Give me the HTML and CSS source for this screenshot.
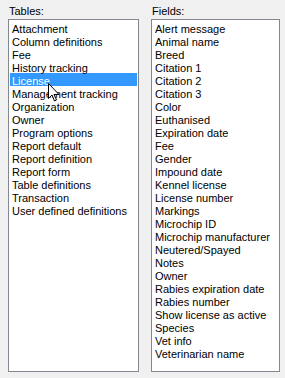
FILE: index.html
```html
<!DOCTYPE html>
<html>
<head>
<meta charset="utf-8">
<link rel="stylesheet" href="styles.css">
</head>
<body>
<div class="panel">
  <div class="group group-tables">
    <div class="label">Tables:</div>
    <ul class="list list-tables">
      <li>Attachment</li>
      <li>Column definitions</li>
      <li>Fee</li>
      <li>History tracking</li>
      <li class="selected">License</li>
      <li>Management tracking</li>
      <li>Organization</li>
      <li>Owner</li>
      <li>Program options</li>
      <li>Report default</li>
      <li>Report definition</li>
      <li>Report form</li>
      <li>Table definitions</li>
      <li>Transaction</li>
      <li>User defined definitions</li>
    </ul>
    <svg class="cursor" width="12" height="19" viewBox="0 0 12 19">
      <path d="M0.5 0.5 L0.5 15.5 L4 12 L6.5 18 L8.5 17 L6 11.5 L11 11.5 Z" fill="#fff" stroke="#000" stroke-width="1" stroke-linejoin="miter"/>
    </svg>
  </div>
  <div class="group group-fields">
    <div class="label">Fields:</div>
    <ul class="list list-fields">
      <li>Alert message</li>
      <li>Animal name</li>
      <li>Breed</li>
      <li>Citation 1</li>
      <li>Citation 2</li>
      <li>Citation 3</li>
      <li>Color</li>
      <li>Euthanised</li>
      <li>Expiration date</li>
      <li>Fee</li>
      <li>Gender</li>
      <li>Impound date</li>
      <li>Kennel license</li>
      <li>License number</li>
      <li>Markings</li>
      <li>Microchip ID</li>
      <li>Microchip manufacturer</li>
      <li>Neutered/Spayed</li>
      <li>Notes</li>
      <li>Owner</li>
      <li>Rabies expiration date</li>
      <li>Rabies number</li>
      <li>Show license as active</li>
      <li>Species</li>
      <li>Vet info</li>
      <li>Veterinarian name</li>
    </ul>
  </div>
</div>
</body>
</html>
```

FILE: styles.css
```css
html, body {
  margin: 0;
  padding: 0;
  background: #f0f0f0;
  width: 285px;
  height: 378px;
  overflow: hidden;
}
body {
  font-family: "Liberation Sans", Arial, sans-serif;
  font-size: 11px;
  color: #000;
}
.panel {
  display: flex;
  padding: 4px 0 0 8px;
  gap: 12px;
}
.group {
  position: relative;
  display: flex;
  flex-direction: column;
}
.group-tables { width: 131px; }
.group-fields { width: 129px; }
.label {
  height: 14px;
  padding-top: 1px;
  line-height: 13px;
  padding-left: 1px;
}
.list {
  list-style: none;
  margin: 0;
  padding: 1px 1px;
  border: 1px solid #828790;
  background: #fff;
  box-sizing: border-box;
  height: 353px;
  overflow: hidden;
}
.list li {
  height: 11px;
  padding-top: 2px;
  line-height: 13px;
  padding-left: 2px;
  white-space: nowrap;
}
.list li.selected {
  background: #3399ff;
  color: #fff;
}
.cursor {
  position: absolute;
  left: 40px;
  top: 79px;
}
```
